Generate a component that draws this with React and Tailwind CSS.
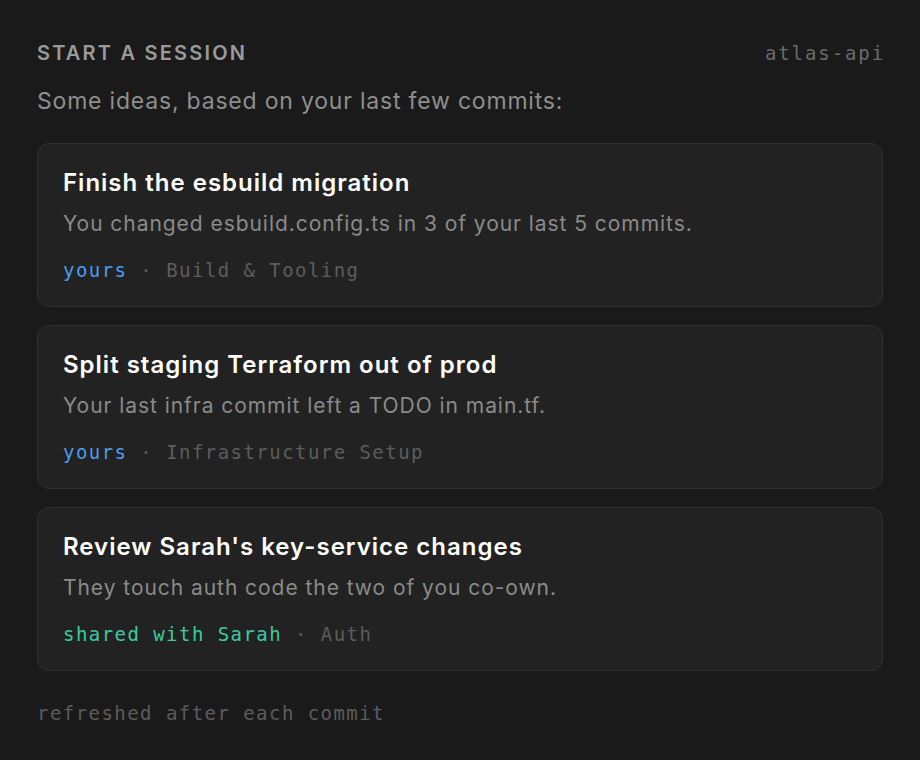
export default function App() {
  const cards = [
    {
      title: "Finish the esbuild migration",
      desc: "You changed esbuild.config.ts in 3 of your last 5 commits.",
      owner: "yours",
      ownerClass: "text-[#4a9ced]",
      area: "Build & Tooling",
    },
    {
      title: "Split staging Terraform out of prod",
      desc: "Your last infra commit left a TODO in main.tf.",
      owner: "yours",
      ownerClass: "text-[#4a9ced]",
      area: "Infrastructure Setup",
    },
    {
      title: "Review Sarah's key-service changes",
      desc: "They touch auth code the two of you co-own.",
      owner: "shared with Sarah",
      ownerClass: "text-[#3ccba2]",
      area: "Auth",
    },
  ];
  const sans = { fontFamily: "Inter, 'Noto Sans', sans-serif" };
  return (
    <div className="min-h-[760px] w-[920px] bg-[#1a1a1a] px-[37px] pt-[39px]" style={sans}>
      <div className="flex items-center justify-between">
        <div className="text-[20px] font-semibold tracking-[2.2px] text-[#9a9a9a] leading-[28px]">START A SESSION</div>
        <div className="-mr-[2px] font-['DejaVu_Sans_Mono',monospace] text-[19px] tracking-[1.9px] text-[#6a6a6a] leading-[28px]">atlas-api</div>
      </div>
      <div className="mt-[19px] text-[23px] leading-[30px] tracking-[0.8px] text-[#8e8e8e]">Some ideas, based on your last few commits:</div>
      <div className="mt-[27px] flex flex-col gap-[18px]">
        {cards.map((c) => (
          <div key={c.title} className="rounded-[12px] border border-[#303030] bg-[#222222] px-[25px] pt-[22px] pb-[23px]">
            <div className="text-[24px] font-semibold leading-[34px] tracking-[1px] text-white">{c.title}</div>
            <div className="mt-[9px] text-[21px] leading-[30px] tracking-[0.95px] text-[#8a8a8a]">{c.desc}</div>
            <div className="mt-[18px] font-['DejaVu_Sans_Mono',monospace] text-[19px] tracking-[1.45px] leading-[26px]">
              <span className={c.ownerClass}>{c.owner}</span>
              <span className="text-[#5c5c5c]"> · {c.area}</span>
            </div>
          </div>
        ))}
      </div>
      <div className="mt-[29px] font-['DejaVu_Sans_Mono',monospace] text-[19px] tracking-[1.45px] leading-[26px] text-[#5c5c5c]">refreshed after each commit</div>
    </div>
  );
}
